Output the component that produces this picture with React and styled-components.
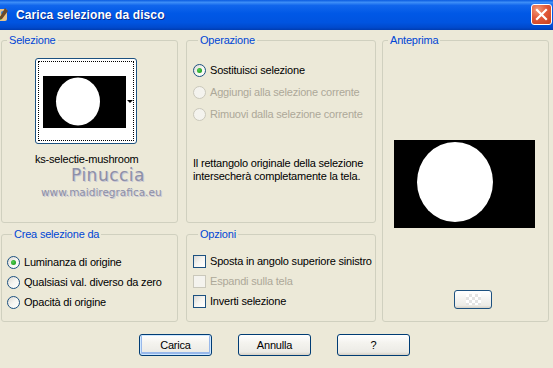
import styled, { createGlobalStyle } from "styled-components";

const GlobalStyle = createGlobalStyle`
  html, body {
    margin: 0;
    padding: 0;
    background: #ece9d8;
    overflow: hidden;
  }
  * {
    box-sizing: border-box;
  }
`;

const Window = styled.div`
  width: 553px;
  height: 368px;
  background: #ece9d8;
  font-family: "Liberation Sans", Arial, sans-serif;
  font-size: 11px;
  letter-spacing: -0.2px;
  color: #000;
  display: flex;
  flex-direction: column;
`;

const TitleBar = styled.div`
  height: 30px;
  display: flex;
  align-items: center;
  padding: 0 1px 1px 0;
  letter-spacing: 0;
  background: linear-gradient(
    to bottom,
    #0a5be0 0%,
    #3d8ef7 8%,
    #1166ec 18%,
    #0058e6 45%,
    #0054e0 75%,
    #0049cc 92%,
    #003cb0 100%
  );
`;

const TitleIcon = styled.svg`
  width: 16px;
  height: 16px;
  margin-left: -7px;
  flex: none;
`;

const Title = styled.span`
  margin-left: 7px;
  flex: 1;
  color: #fff;
  font-family: "Liberation Sans", Arial, sans-serif;
  font-weight: bold;
  font-size: 12px;
  letter-spacing: 0.1px;
  text-shadow: 1px 1px 0 #0a2a8a;
`;

const CloseButton = styled.div`
  width: 21px;
  height: 21px;
  border: 1px solid #fff;
  border-radius: 3px;
  background: radial-gradient(
    circle at 30% 25%,
    #f29a78 0%,
    #e2593a 45%,
    #c8401c 100%
  );
  display: flex;
  align-items: center;
  justify-content: center;
`;

const Body = styled.div`
  flex: 1;
  display: flex;
  flex-direction: column;
  padding: 4px 0 0 1px;
`;

const Groups = styled.div`
  display: grid;
  grid-template-columns: 177px 8px 190px 6px 167px;
  grid-template-rows: 189px 94px;
  row-gap: 5px;
  grid-template-areas:
    "sel . op . prev"
    "crea . opt . prev";
`;

const Group = styled.fieldset`
  grid-area: ${({ $area }) => $area};
  margin: 0;
  padding: ${({ $pad }) => $pad || "0"};
  min-width: 0;
  border: 1px solid #d0d0bf;
  border-radius: 3px;
  display: flex;
  flex-direction: column;
`;

const Legend = styled.legend`
  color: #0046d5;
  margin-left: 5px;
  padding: 0 2px 0 2px;
  line-height: 13px;
`;

const Row = styled.label`
  height: ${({ $h }) => $h || 20}px;
  display: flex;
  align-items: center;
  gap: 4px;
  white-space: nowrap;
  color: ${({ $disabled }) => ($disabled ? "#aca899" : "#000")};
`;

const Radio = styled.span`
  width: 13px;
  height: 13px;
  flex: none;
  border-radius: 50%;
  border: 1px solid ${({ $disabled }) => ($disabled ? "#cac8bb" : "#1c5180")};
  background: ${({ $disabled }) =>
    $disabled
      ? "#f4f3ee"
      : "linear-gradient(135deg, #dcdad5 0%, #f6f5f1 50%, #ffffff 100%)"};
  display: flex;
  align-items: center;
  justify-content: center;

  &::after {
    content: "";
    width: 5px;
    height: 5px;
    border-radius: 50%;
    background: ${({ $checked }) =>
      $checked
        ? "radial-gradient(circle at 40% 40%, #55d055 0%, #21a121 70%)"
        : "transparent"};
  }
`;

const Check = styled.span`
  width: 13px;
  height: 13px;
  flex: none;
  border: 1px solid ${({ $disabled }) => ($disabled ? "#cac8bb" : "#1c5180")};
  background: ${({ $disabled }) =>
    $disabled
      ? "#f4f3ee"
      : "linear-gradient(135deg, #dcdad5 0%, #f6f5f1 50%, #ffffff 100%)"};
`;

const Note = styled.p`
  margin: 32px 0 0 0;
  line-height: 13px;
  white-space: nowrap;
`;

const ThumbButton = styled.div`
  margin: 11px 0 0 33px;
  width: 102px;
  height: 86px;
  border: 1px solid #1c5180;
  border-radius: 3px;
  background: #fff;
  padding: 2px;
  position: relative;
`;

const FocusRect = styled.div`
  height: 100%;
  border: 1px dotted #000;
  padding: 14px 0 0 4px;
  display: flex;
  align-items: flex-start;
`;

const DropArrow = styled.span`
  position: absolute;
  right: 3px;
  top: 41px;
  width: 0;
  height: 0;
  border-left: 3px solid transparent;
  border-right: 3px solid transparent;
  border-top: 3px solid #000;
`;

const FileName = styled.div`
  margin: 9px 0 0 33px;
  line-height: 13px;
  width: 103px;
  text-align: center;
  white-space: nowrap;
`;

const Watermark = styled.div`
  display: block;
  line-height: 1;
  color: #8d8fa8;
  text-shadow: 1px 1px 0 #c9c8d4;
  font-family: "DejaVu Sans", sans-serif;
  letter-spacing: 0;
  white-space: nowrap;
`;

const WaterName = styled.div`
  font-size: 17px;
  letter-spacing: 0.5px;
  margin: 1px 0 0 69px;
`;

const WaterSite = styled.div`
  font-size: 10.5px;
  margin: 3px 0 0 39px;
`;

const Preview = styled.svg`
  display: block;
  margin: 93px 0 0 11px;
  width: 141px;
  height: 88px;
`;

const SmallButton = styled.div`
  margin: 62px 0 0 71px;
  width: 38px;
  height: 19px;
  border: 1px solid #1c5180;
  border-radius: 3px;
  background: linear-gradient(to bottom, #ffffff, #ecebe6 85%, #d6d0c5);
  display: flex;
  align-items: center;
  justify-content: center;
`;

const Checker = styled.span`
  width: 15px;
  height: 11px;
  background-color: #fff;
  background-image: linear-gradient(45deg, #e4e4e4 25%, transparent 25%),
    linear-gradient(-45deg, #e4e4e4 25%, transparent 25%),
    linear-gradient(45deg, transparent 75%, #e4e4e4 75%),
    linear-gradient(-45deg, transparent 75%, #e4e4e4 75%);
  background-size: 6px 6px;
  background-position: 0 0, 0 3px, 3px -3px, -3px 0;
`;

const ButtonRow = styled.div`
  display: flex;
  gap: 26px;
  padding: 12px 0 0 138px;
`;

const Button = styled.div`
  width: 73px;
  height: 22px;
  border: 1px solid #003c74;
  border-radius: 3px;
  background: linear-gradient(to bottom, #ffffff 0%, #f4f3ee 40%, #ecebe6 85%, #d6d0c5 100%);
  box-shadow: ${({ $default }) =>
    $default
      ? "inset 0 0 0 1px #cee7ff, inset 0 -1px 0 2px #98b8ea"
      : "none"};
  display: flex;
  align-items: center;
  justify-content: center;
  font-size: 11px;
`;

const App = () => {
  return (
    <>
      <GlobalStyle />
      <Window>
        <TitleBar>
          <TitleIcon viewBox="0 0 16 16">
            <rect x="1" y="2" width="13" height="12" rx="2" fill="#e8c48a" />
            <circle cx="5" cy="6" r="2" fill="#d83a2a" />
            <circle cx="10" cy="6" r="2" fill="#2c7fd8" />
            <circle cx="7" cy="11" r="2" fill="#3aa844" />
            <path d="M12 1 L15 4 L9 12 L7 12 L7 10 Z" fill="#6b4b2a" />
          </TitleIcon>
          <Title>Carica selezione da disco</Title>
          <CloseButton>
            <svg width="13" height="13" viewBox="0 0 13 13">
              <path
                d="M2 2 L11 11 M11 2 L2 11"
                stroke="#fff"
                strokeWidth="2.2"
                strokeLinecap="square"
              />
            </svg>
          </CloseButton>
        </TitleBar>

        <Body>
          <Groups>
            <Group $area="sel">
              <Legend>Selezione</Legend>
              <ThumbButton>
                <FocusRect>
                  <svg width="83" height="52" viewBox="0 0 83 52">
                    <rect width="83" height="52" fill="#000" />
                    <ellipse cx="35" cy="25.5" rx="22" ry="24" fill="#fff" />
                  </svg>
                </FocusRect>
                <DropArrow />
              </ThumbButton>
              <FileName>ks-selectie-mushroom</FileName>
              <Watermark>
                <WaterName>Pinuccia</WaterName>
                <WaterSite>www.maidiregrafica.eu</WaterSite>
              </Watermark>
            </Group>

            <Group $area="op" $pad="12px 6px 0 6px">
              <Legend>Operazione</Legend>
              <Row $h={22}>
                <Radio $checked />
                Sostituisci selezione
              </Row>
              <Row $h={22} $disabled>
                <Radio $disabled />
                Aggiungi alla selezione corrente
              </Row>
              <Row $h={22} $disabled>
                <Radio $disabled />
                Rimuovi dalla selezione corrente
              </Row>
              <Note>
                Il rettangolo originale della selezione
                <br />
                intersecherà completamente la tela.
              </Note>
            </Group>

            <Group $area="prev">
              <Legend>Anteprima</Legend>
              <Preview viewBox="0 0 141 88">
                <rect width="141" height="88" fill="#000" />
                <ellipse cx="61" cy="42" rx="38" ry="40" fill="#fff" />
              </Preview>
              <SmallButton>
                <Checker />
              </SmallButton>
            </Group>

            <Group $area="crea" $pad="11px 5px 0 5px">
              <Legend>Crea selezione da</Legend>
              <Row>
                <Radio $checked />
                Luminanza di origine
              </Row>
              <Row>
                <Radio />
                Qualsiasi val. diverso da zero
              </Row>
              <Row>
                <Radio />
                Opacità di origine
              </Row>
            </Group>

            <Group $area="opt" $pad="10px 6px 0 6px">
              <Legend>Opzioni</Legend>
              <Row>
                <Check />
                Sposta in angolo superiore sinistro
              </Row>
              <Row $disabled>
                <Check $disabled />
                Espandi sulla tela
              </Row>
              <Row>
                <Check />
                Inverti selezione
              </Row>
            </Group>
          </Groups>

          <ButtonRow>
            <Button $default>Carica</Button>
            <Button>Annulla</Button>
            <Button>?</Button>
          </ButtonRow>
        </Body>
      </Window>
    </>
  );
};

export default App;
